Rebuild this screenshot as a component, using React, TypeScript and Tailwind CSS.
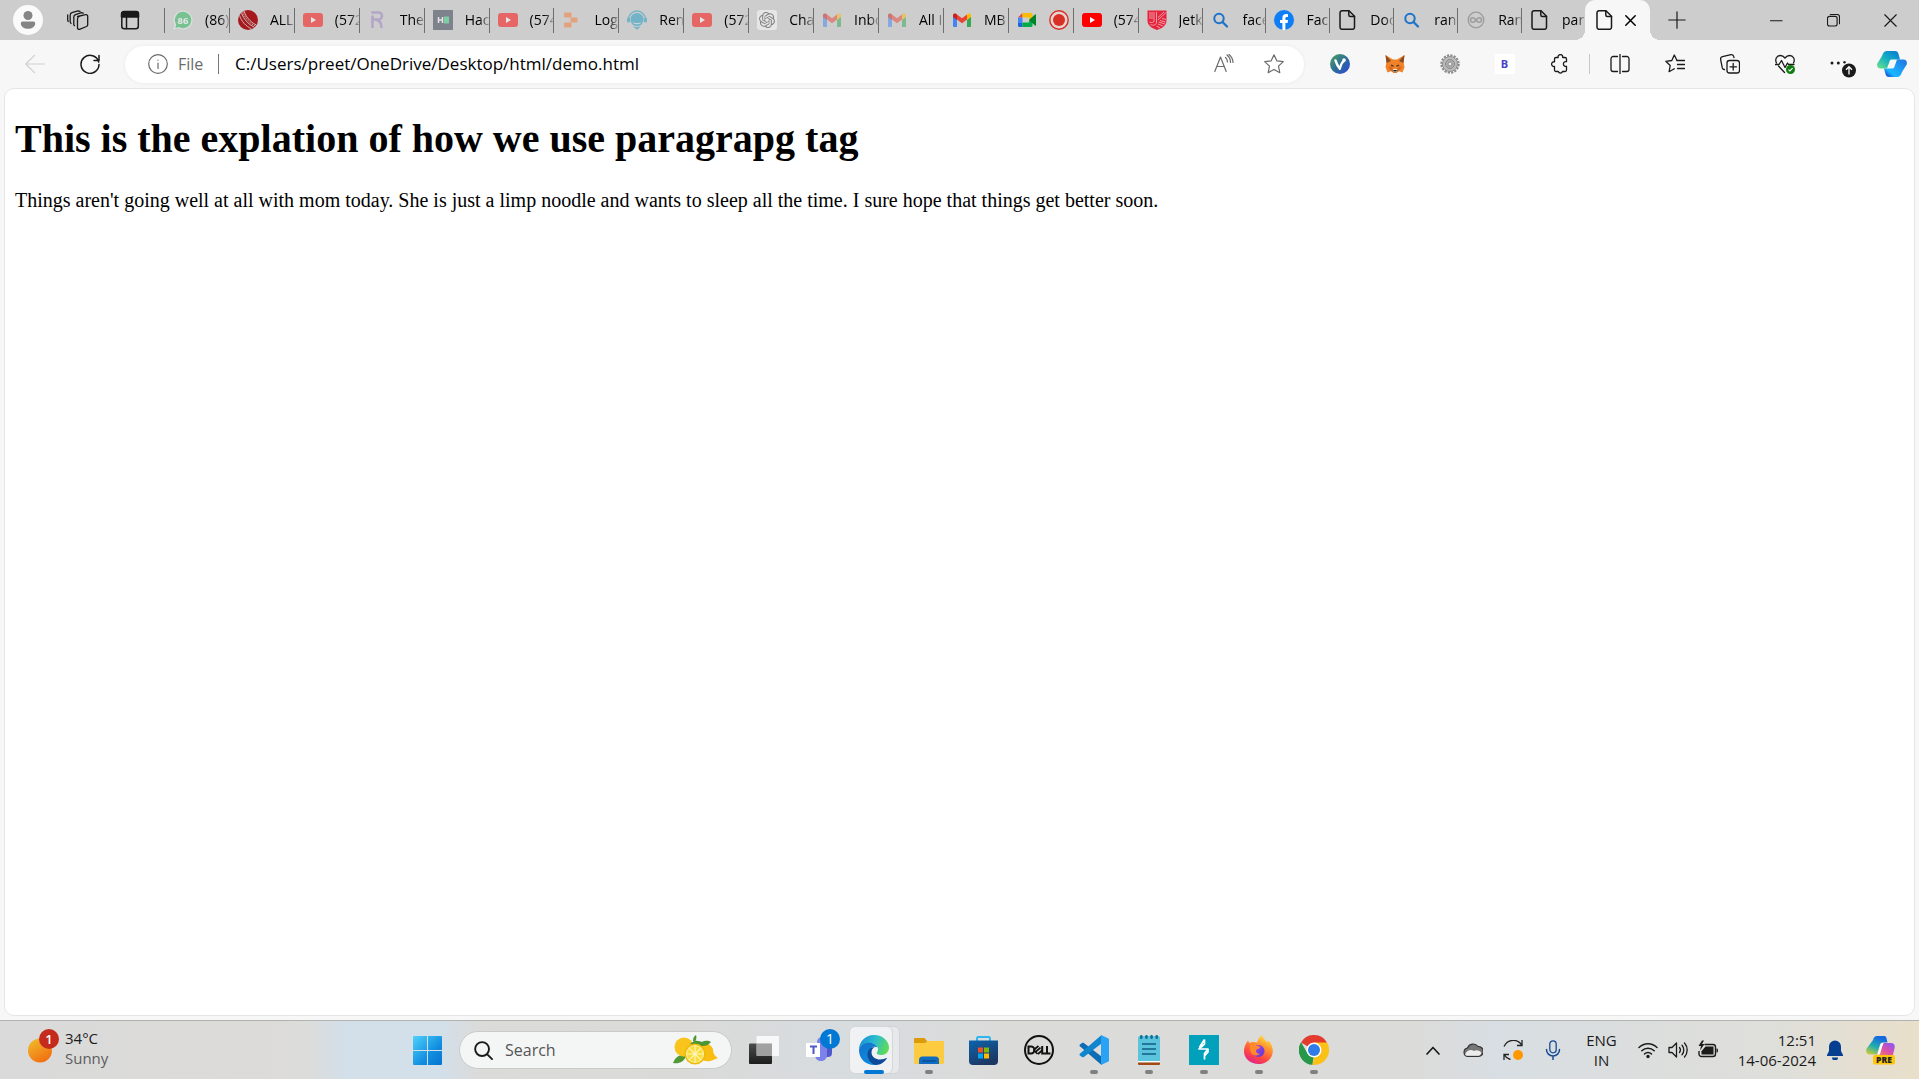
import React, { useState } from "react";
import type { ReactNode } from "react";
import { SiOpenai } from "react-icons/si";

type IconProps = { className?: string };

function Svg({ children, className = "size-5", box = "0 0 20 20" }: IconProps & { children: ReactNode; box?: string }) {
  return (
    <svg viewBox={box} className={`shrink-0 ${className}`} fill="none" aria-hidden="true">
      {children}
    </svg>
  );
}

function Line({ children, className, w = 1.2, box }: IconProps & { children: ReactNode; w?: number; box?: string }) {
  return (
    <Svg className={className} box={box}>
      <g stroke="currentColor" strokeWidth={w} strokeLinecap="round" strokeLinejoin="round">
        {children}
      </g>
    </Svg>
  );
}

/* ---------- favicons ---------- */

const YouTube = () => (
  <Svg>
    <rect y="3" width="20" height="14" rx="3" fill="#f00" />
    <path d="M8 7v6l5-3z" fill="#fff" />
  </Svg>
);

const WhatsApp = () => (
  <Svg>
    <path d="M10 .5a9.500 9.500 0 0 1 0 19 9.500 9.500 0 0 1-4.500-1.200L.4 19.600l1.300-5A9.500 9.500 0 0 1 10 .5z" fill="#e9f5ec" />
    <path d="M10 1.800a8.200 8.200 0 1 1-4.200 15.200l-3.500.9.900-3.400A8.200 8.200 0 0 1 10 1.800z" fill="#25b756" />
    <text x="10" y="13.500" textAnchor="middle" fontSize="9.500" fontWeight="700" fill="#fff" fontFamily="Open Sans, sans-serif">86</text>
  </Svg>
);

const CricketBall = () => (
  <Svg>
    <circle cx="10" cy="10" r="10" fill="#a5191d" />
    <g stroke="#cdbcbc" strokeWidth="1">
      <path d="M3.500 2.800c2 6 6.500 11.500 12.800 14.300" />
      <path d="M6 1c2 6 6 10.800 12 13.800" />
      <path d="M1.500 5.300c2 6 6 10.800 12 13.500" />
    </g>
    <path d="M4.800 2c2 6 6.400 11 12.500 14" stroke="#d9cccc" strokeWidth=".8" strokeDasharray="1.500 .7" />
  </Svg>
);

const LetterR = () => (
  <Svg>
    <g stroke="#9b80c4" strokeWidth="2.600">
      <path d="M4.500 18v-8.500h6a3.500 3.500 0 0 0 0-7H3.200" />
      <path d="M8.500 10c3 .5 5 3.500 5 8M4.500 5.500v4" />
    </g>
  </Svg>
);

const HackerEarth = () => (
  <Svg>
    <rect width="20" height="20" fill="#323b4b" />
    <path d="M5.500 7v6M9.500 7v6M5.500 10h4" stroke="#fff" strokeWidth="1.500" />
    <path d="M11 6.500h5v7h-5z" fill="#2fd07c" />
  </Svg>
);

const Blocks = () => (
  <Svg>
    <g fill="#f9782f">
      <rect x="2" y="2.500" width="7.500" height="5" rx="1" />
      <rect x="8.500" y="7.500" width="7" height="5" rx="1" />
      <rect x="2" y="12.500" width="7.500" height="5" rx="1" />
    </g>
  </Svg>
);

const Headset = () => (
  <Svg>
    <path d="M1.500 9.500a8.500 8.500 0 0 1 17 0" stroke="#1b9ac4" strokeWidth="1.300" />
    <rect x="0" y="7.500" width="3" height="5" rx="1.500" fill="#1b9ac4" />
    <rect x="17" y="7.500" width="3" height="5" rx="1.500" fill="#1b9ac4" />
    <circle cx="10" cy="9.500" r="6.600" fill="#1b9ac4" />
    <path d="M6 16.200c2.500 1 5.500 1 8 0l-4 3.500z" fill="#1b9ac4" />
    <path d="M5.500 12.500c2 2.200 7 2.200 9 0l-4.500.7z" fill="#d7ecf3" />
  </Svg>
);

const OpenAI = () => (
  <span className="flex size-5 items-center justify-center rounded-[3px] bg-white text-[#3c3c3c]">
    <SiOpenai size={16} />
  </span>
);

const Gmail = () => (
  <Svg>
    <path d="M1 5v11.200c0 .5.300.800.800.800H5V8.500z" fill="#4285f4" />
    <path d="M19 5v11.200c0 .5-.3.800-.8.800H15V8.500z" fill="#34a853" />
    <path d="M5 4.500v5l5 3.700 5-3.700v-5L10 8.200z" fill="#ea4335" />
    <path d="M1 5v2l4 3V4.500l-.9-.7C2.800 2.900 1 3.500 1 5z" fill="#c5221f" />
    <path d="M19 5v2l-4 3V4.500l.9-.7C17.200 2.900 19 3.500 19 5z" fill="#fbbc04" />
  </Svg>
);

const Meet = () => (
  <Svg>
    <path d="M1 7.500 5.500 3v4.500z" fill="#ea4335" />
    <path d="M5.500 3h8.700C15 3 15.500 3.500 15.500 4.200V8L12 10V7.500H5.500z" fill="#fbbc04" />
    <path d="M1 7.500h4.500v5.500H1z" fill="#4285f4" />
    <path d="M1 13h4.500v4H2.200C1.500 17 1 16.500 1 15.800z" fill="#1967d2" />
    <path d="M5.500 12.500H12V10l3.500 2.500v3.300c0 .7-.5 1.200-1.300 1.200H5.500z" fill="#00ac47" />
    <path d="m12 10 6-5.500c.4-.4 1-.1 1 .4v10.200c0 .5-.6.800-1 .4z" fill="#00832d" />
  </Svg>
);

const Recording = () => (
  <Svg>
    <circle cx="10" cy="10" r="9.200" stroke="#d93025" strokeWidth="1.400" fill="#e7d5d3" />
    <circle cx="10" cy="10" r="6" fill="#d93025" />
  </Svg>
);

const Shield = () => (
  <Svg>
    <path d="M.5.500h19v10c0 5-4.500 8-9.500 9.500C5 18.500.5 15.500.5 10.500z" fill="#e8223b" />
    <g stroke="#e7bcc1" strokeWidth=".8">
      <path d="M3 2v7M5 2v7M7 2v9c0 1.500-2.500 2-4.500 1M9.500 2v10c0 3-3 4-6 2.500M11 7.500l6-5.500M11 10l8-7.500M11.500 12l6.500 2M13 10.500l5.500 1.500M11 14l5 2M9.500 16l3.500 2M15 8.500l4 1" />
    </g>
  </Svg>
);

const BlueSearch = () => (
  <Svg>
    <circle cx="8" cy="8.500" r="4.700" stroke="#1b74c9" strokeWidth="2" />
    <path d="m11.500 12 4.500 4.500" stroke="#1b74c9" strokeWidth="2.300" strokeLinecap="round" />
  </Svg>
);

const Facebook = () => (
  <Svg>
    <circle cx="10" cy="10" r="10" fill="#0d7ef5" />
    <path d="M8.400 20v-7H6v-3h2.400V8c0-2.500 1.400-3.900 3.700-3.900.7 0 1.500.1 1.900.2v2.600h-1.200c-1.100 0-1.400.6-1.400 1.300V10h2.600l-.4 3h-2.200v7z" fill="#fff" />
  </Svg>
);

const FileIcon = () => (
  <Line w={1.500}>
    <path d="M4 .8h7L16.500 6.300v11a2 2 0 0 1-2 2H4a2 2 0 0 1-2-2V2.800a2 2 0 0 1 2-2z" />
    <path d="M10.800 1v4a1.500 1.500 0 0 0 1.500 1.500h4.200" />
  </Line>
);

const Infinity8 = () => (
  <Svg>
    <circle cx="10" cy="10" r="7.800" stroke="#9c9c9c" strokeWidth="1.300" />
    <path d="M10 10c-1-1.500-2-2.300-3.200-2.300a2.300 2.300 0 0 0 0 4.600C8 12.300 9 11.500 10 10s2-2.300 3.200-2.300a2.300 2.300 0 0 1 0 4.600C12 12.300 11 11.500 10 10z" stroke="#9c9c9c" strokeWidth="1.500" />
  </Svg>
);

/* ---------- toolbar icons ---------- */

const Fox = () => (
  <Svg>
    <path d="m.5 1 7.500 4.500h4L19.500 1l-1 7 1 5-2 5.500-4-1.500-2 1.700h-3L6.500 17l-4 1.500-2-5.500 1-5z" fill="#f0822a" />
    <path d="m.5 1 5.500 6-4.500 2zM19.500 1 14 7l4.500 2z" fill="#8a4b24" />
    <path d="m6 11 2.500 1-2-.2zM14 11l-2.500 1 2-.2z" stroke="#3a2a22" strokeWidth=".8" />
    <path d="m3 13 4-.5 1 4.500h4l1-4.500 4 .5-3 4-2.500 1.700h-3L6 17z" fill="#d96a1d" />
    <path d="m8 15.500.5-.5h3l.5.500V18H8z" fill="#f0e8df" />
    <path d="M8.300 16h3.400v1.500H8.300z" fill="#222" />
  </Svg>
);

const Vue = () => (
  <Svg>
    <defs>
      <linearGradient id="vg" x1="0" y1="0" x2="1" y2="1">
        <stop offset=".1" stopColor="#4a9a68" />
        <stop offset=".5" stopColor="#2c6d96" />
        <stop offset="1" stopColor="#2f45dd" />
      </linearGradient>
    </defs>
    <circle cx="10" cy="10" r="10" fill="url(#vg)" />
    <path d="M5.500 6.500c1 3 2.300 5.800 4.300 8.300 1-3 1.300-6.300 4.500-8.300" stroke="#fff" strokeWidth="2.400" strokeLinecap="round" strokeLinejoin="round" />
    <circle cx="14" cy="6" r="1.800" fill="#fff" />
  </Svg>
);

const Gear = () => (
  <Svg>
    <circle cx="10" cy="10" r="8.700" stroke="#8a8a8a" strokeWidth="2" strokeDasharray="2.200 1.220" />
    <circle cx="10" cy="10" r="7.500" fill="#bdbdbd" stroke="#8b8b8b" strokeWidth="1" />
    <circle cx="10" cy="10" r="4.500" fill="#b0b0b0" stroke="#7a7a7a" strokeWidth=".8" />
    <circle cx="10" cy="10" r="2" fill="#ececec" stroke="#777" strokeWidth=".8" />
  </Svg>
);

const BSquare = () => (
  <span className="flex size-5 items-center justify-center bg-white text-[11px] font-bold text-[#4440c4]">B</span>
);

const Puzzle = () => (
  <Line w={1.300}>
    <path d="M6 3.500h2.200a2.300 2.300 0 1 1 4.400 0H15a1.500 1.500 0 0 1 1.500 1.500v2.700a2.400 2.400 0 1 0 0 4.600V16a1.500 1.500 0 0 1-1.500 1.500h-2.500a2.200 2.200 0 0 1-4.200 0H6A1.500 1.500 0 0 1 4.500 16v-3.500a2.400 2.400 0 1 1 0-4.700V5A1.500 1.500 0 0 1 6 3.500z" />
  </Line>
);

const SplitScreen = () => (
  <Line w={1.300}>
    <path d="M10 .5v19M7.500 2.500H3.200A2.200 2.200 0 0 0 1 4.700v10.600a2.200 2.200 0 0 0 2.200 2.200h4.300M12.500 2.500h4.300A2.200 2.200 0 0 1 19 4.700v10.600a2.200 2.200 0 0 1-2.200 2.200h-4.300" />
  </Line>
);

const FavList = () => (
  <Line w={1.300}>
    <path d="M12 6.500 9.300 1 6.800 6.500.8 7.300l4.400 4.200-1.100 6.200 5.200-3" />
    <path d="M12 6.500h7.500M12.500 10.500h7M12.500 14.500h7" />
  </Line>
);

const Collections = () => (
  <Line w={1.300}>
    <rect x="7" y="6.500" width="12.500" height="12.500" rx="2.500" />
    <path d="M13.200 9.500v6.500M10 12.800h6.500M4.500 15.500l-1-.2a2 2 0 0 1-1.200-1.400L.6 5.500A2.500 2.500 0 0 1 2.500 2.700L11 .7a2.500 2.500 0 0 1 2.800 2l.2.800" />
  </Line>
);

const HeartPulse = () => (
  <Svg>
    <g stroke="#1a1a1a" strokeWidth="1.300" strokeLinejoin="round" strokeLinecap="round">
      <path d="M1.500 9C-.5 5 2 1.500 5.300 1.500c2 0 3.500 1 4.700 2.500 1.200-1.500 2.700-2.500 4.700-2.500C18 1.500 20.500 5 18.500 9M3.500 12l6 6.500" />
      <path d="M0 10.500h4l2.500-4 3.500 7 2.500-4.500 1 1.500H19" />
    </g>
    <circle cx="15.500" cy="15.500" r="4.500" fill="#107c10" />
    <path d="m13.500 15.600 1.400 1.400 2.700-2.800" stroke="#fff" strokeWidth="1.100" />
  </Svg>
);

const MoreUpdate = () => (
  <Svg className="h-7 w-8" box="-5 0 32 28">
    <g fill="#1a1a1a">
      <circle cx="3" cy="13" r="1.500" />
      <circle cx="9.300" cy="13" r="1.500" />
      <circle cx="15.500" cy="12.200" r="1.200" />
      <circle cx="20" cy="20.500" r="7" />
    </g>
    <path d="M20 24.500V17M17 19.700l3-3 3 3" stroke="#fff" strokeWidth="1.300" />
  </Svg>
);

const Copilot = () => (
  <Svg className="h-[26px] w-[30px]" box="0 0 30 26">
    <defs>
      <linearGradient id="ca" gradientUnits="userSpaceOnUse" x1="4" y1="18" x2="18" y2="0">
        <stop offset="0" stopColor="#62dc8e" />
        <stop offset=".5" stopColor="#14b0c4" />
        <stop offset="1" stopColor="#0b80d0" />
      </linearGradient>
      <linearGradient id="cb" gradientUnits="userSpaceOnUse" x1="26" y1="8" x2="10" y2="26">
        <stop offset="0" stopColor="#2078e0" />
        <stop offset=".5" stopColor="#1aa5fa" />
        <stop offset=".75" stopColor="#1ab8ff" />
        <stop offset="1" stopColor="#1447d0" />
      </linearGradient>
    </defs>
    <path d="M25 21c-1 3.500-2.500 5-5 5h-8c-2 0-3-1-3.500-3L7 17.500h8.500c1.200 0 1.700-.8 2-2L20 8.500h6.500c2.500 0 4 2 3.200 5z" fill="url(#cb)" />
    <path d="M5 5C6 1.500 7.500 0 10 0h8c2 0 3 1 3.500 3L23 8.500h-8.500c-1.200 0-1.700.8-2 2L10 17.500H3.500C1 17.500-.5 15.500.3 12.500z" fill="url(#ca)" />
  </Svg>
);

/* ---------- taskbar icons ---------- */

const Windows = () => (
  <Svg className="size-[29px]" box="0 0 29 29">
    <defs>
      <linearGradient id="wg" gradientUnits="userSpaceOnUse" x1="0" y1="0" x2="29" y2="29">
        <stop stopColor="#4fd2fb" />
        <stop offset=".6" stopColor="#128fe0" />
        <stop offset="1" stopColor="#0573cf" />
      </linearGradient>
    </defs>
    <path d="M0 1a1 1 0 0 1 1-1h13v14H0zM15 0h13a1 1 0 0 1 1 1v13H15zM0 15h14v14H1a1 1 0 0 1-1-1zM15 15h14v13a1 1 0 0 1-1 1H15z" fill="url(#wg)" />
  </Svg>
);

const Lemons = () => (
  <Svg className="h-[30px] w-[46px]" box="0 0 46 30">
    <path d="M20 6c0-3 1-5 3-6 1 3 0 5-1 7zM0 28c3-7 7-9 13-7-2 6-7 8-13 7z" fill="#4f9a34" />
    <circle cx="11" cy="12" r="9.500" fill="#f9c51d" />
    <path d="M28 8c6-1 10 2 12 6 0 4 1 6 5 9-3 1-4 2-8 3-6 1-11-2-12-8 0-5 0-8 3-10z" fill="#f7bd11" />
    <path d="M17 9c5-5 9-3 12-2 4-2 7-1 9 0-3 3-5 4-8 4-5 0-9 1-13-2z" fill="#4c9434" />
    <circle cx="22" cy="19" r="10.500" fill="#efb90c" />
    <circle cx="22" cy="19" r="9" fill="#fff3a8" />
    <circle cx="22" cy="19" r="8" fill="#f8dc3c" />
    <path d="M22 11v16M14 19h16M16.300 13.300l11.400 11.400M27.700 13.300 16.300 24.700" stroke="#fff6c0" strokeWidth="1.100" />
  </Svg>
);

const TaskView = () => (
  <Svg className="h-7 w-[30px]" box="0 0 30 28">
    <defs>
      <linearGradient id="tv" x1="0" y1="0" x2="0" y2="1">
        <stop stopColor="#4c4c4c" />
        <stop offset="1" stopColor="#1d1d1d" />
      </linearGradient>
    </defs>
    <rect y="7.500" width="23" height="20.500" rx="1" fill="url(#tv)" />
    <rect x="7.500" width="22.500" height="20" rx="1" fill="#fff" opacity=".8" />
    <path d="M7.500 7.500H23V20H8.500a1 1 0 0 1-1-1z" fill="#8f8f8f" opacity=".75" />
  </Svg>
);

const Teams = () => (
  <Svg className="size-[42px]" box="-8 0 42 42">
    <circle cx="16" cy="13" r="5" fill="#7b83eb" />
    <path d="M17 14h9v10c0 3-2 4-4 4h-5z" fill="#5059c9" />
    <path d="M9 15h12v11c0 4-3 6-6 6s-6-2-6-6z" fill="#7b83eb" />
    <rect y="14" width="14" height="14" fill="#fff" />
    <path d="M4 17.500h7M7.500 17.500V25" stroke="#5059c9" strokeWidth="2" />
    <circle cx="24" cy="10" r="10" fill="#0078d4" />
    <text x="24" y="15" textAnchor="middle" fontSize="14" fill="#fff" fontFamily="Open Sans, sans-serif">1</text>
  </Svg>
);

const Edge = () => (
  <Svg className="size-[30px]" box="0 0 30 30">
    <defs>
      <linearGradient id="eg" x1="0" y1=".3" x2="1" y2=".6">
        <stop stopColor="#1a8edb" />
        <stop offset=".5" stopColor="#2bbfcb" />
        <stop offset="1" stopColor="#62dc50" />
      </linearGradient>
      <linearGradient id="eb" x1="0" y1="0" x2=".6" y2="1">
        <stop stopColor="#1273c9" />
        <stop offset="1" stopColor="#0f8be0" />
      </linearGradient>
    </defs>
    <path d="M0 15C0 7 6 0 15 0s15 6.500 15 12.500c0 5-4 7.500-7.500 7.500-3 0-4.800-1-4.800-2 0-.8 1.300-1.200 1.300-4 0-3-3.500-6-8.500-6C5 8 1 11 0 15z" fill="url(#eg)" />
    <path d="M0 15c1-4.500 5-7.200 10-7.200 4 0 7.500 1.700 8.500 4.700-4-2-8 1-8 6 0 5.500 4 10 8.500 11-1.200.4-2.500.5-4 .5C6.500 30 0 23.500 0 15z" fill="url(#eb)" />
    <path d="M16 12c-2.500 1-3.500 3-3.500 5.500 0 4.500 4.500 7 8.500 7 3 0 5-.8 6.300-1.500.5-.2.800.2.500.6C25 27.500 21.500 30 17 30 12 29 8.500 24.500 8.500 19.500c0-4 2.500-7.300 7.500-7.500z" fill="#0d4a98" />
  </Svg>
);

const Explorer = () => (
  <Svg className="h-[27px] w-[30px]" box="0 0 30 27">
    <path d="M0 2a1 1 0 0 1 1-1h9.500L13 4h16a1 1 0 0 1 1 1v5H0z" fill="#dc9b0b" />
    <path d="M0 6h11l2.500-2H29a1 1 0 0 1 1 1v21a1 1 0 0 1-1 1H1a1 1 0 0 1-1-1z" fill="#fdcb3f" />
    <path d="M5 27v-4a3.500 3.500 0 0 1 3.500-3.500h13A3.500 3.500 0 0 1 25 23v4z" fill="#0f6cc0" />
    <path d="M8.500 24h13" stroke="#0b4a8c" strokeWidth="1.300" />
  </Svg>
);

const Store = () => (
  <Svg className="h-[30px] w-[29px]" box="0 0 29 30">
    <defs>
      <linearGradient id="st" x1="0" y1="0" x2=".5" y2="1">
        <stop stopColor="#0b64ae" />
        <stop offset="1" stopColor="#1d3763" />
      </linearGradient>
    </defs>
    <path d="M8 7V3.500A1.500 1.500 0 0 1 9.500 2h10A1.500 1.500 0 0 1 21 3.500V7" stroke="#2fb5f2" strokeWidth="2" />
    <path d="M0 5.500h29V26a4 4 0 0 1-4 4H4a4 4 0 0 1-4-4z" fill="url(#st)" />
    <path d="M9 12.500h5v5H9z" fill="#f25022" />
    <path d="M15 12.500h5v5h-5z" fill="#7fba00" />
    <path d="M9 18.500h5v5H9z" fill="#00a4ef" />
    <path d="M15 18.500h5v5h-5z" fill="#ffb900" />
  </Svg>
);

const Dell = () => (
  <Svg className="size-[30px]" box="0 0 30 30">
    <circle cx="15" cy="15" r="14" stroke="#111" strokeWidth="2" />
    <g stroke="#111" strokeWidth="2">
      <path d="M4.500 11.500H7a3.500 3.500 0 0 1 0 7H4.500z" />
      <path d="m9.500 15 5-4M9.500 15l4 4M12 16.500l4.500-3.800M14 19l4.500-4" strokeWidth="1.700" />
      <path d="M18.200 11v7.500H22M23 11v7.500h3.500" />
    </g>
  </Svg>
);

const VSCode = () => (
  <Svg className="size-[30px]" box="0 0 30 30">
    <path d="M1 9.500 3 8c.6-.4 1.300-.4 1.800 0L22.500 21.500V30L.9 11.300c-.6-.5-.5-1.300.1-1.800z" fill="#0d6cb4" />
    <path d="M1 20.500 3 22c.6.400 1.300.4 1.800 0L22.500 8.500V0L.9 18.700c-.6.500-.5 1.300.1 1.800z" fill="#0f84cf" />
    <path d="m22 0 7 3.200c.6.300 1 .8 1 1.500v20.600c0 .7-.4 1.200-1 1.500L22 30z" fill="#2aa3f4" />
  </Svg>
);

const Notepad = () => (
  <Svg className="h-[30px] w-[22px]" box="0 0 22 30">
    <path d="M0 3a2 2 0 0 1 2-2h18a2 2 0 0 1 2 2v24H0z" fill="#5cc3dc" />
    <path d="M0 26h22v1.500H0z" fill="#fff" />
    <path d="M0 27.500h22V29a1 1 0 0 1-1 1H1a1 1 0 0 1-1-1z" fill="#a34a14" />
    <path d="M4 9h14M4 14h14M4 19h14" stroke="#0f5c85" strokeWidth="1.600" />
    <g fill="#0f6f95">
      <rect x="2" width="2.500" height="4" rx="1.200" />
      <rect x="7.200" width="2.500" height="4" rx="1.200" />
      <rect x="12.300" width="2.500" height="4" rx="1.200" />
      <rect x="17.500" width="2.500" height="4" rx="1.200" />
    </g>
  </Svg>
);

const Burp = () => (
  <Svg className="size-[30px]" box="0 0 30 30">
    <rect width="30" height="30" fill="#02a1bb" />
    <path d="M15.500 4.500V9L10 14h9l-3.500 4.500v6M15.500 4.500 11 11.500l-.5 2.500H19v3l-3.500 4" stroke="#fff" strokeWidth="1.700" strokeLinejoin="round" />
  </Svg>
);

const Firefox = () => (
  <Svg className="h-[30px] w-[29px]" box="0 0 29 30">
    <defs>
      <linearGradient id="ff" x1=".8" y1="0" x2=".3" y2="1">
        <stop stopColor="#ffe847" />
        <stop offset=".35" stopColor="#ff9a2e" />
        <stop offset=".7" stopColor="#ff4a3f" />
        <stop offset="1" stopColor="#e0208a" />
      </linearGradient>
      <linearGradient id="fp" x1="0" y1="0" x2="1" y2="1">
        <stop stopColor="#b044f5" />
        <stop offset="1" stopColor="#5b3ac9" />
      </linearGradient>
    </defs>
    <path d="M4 5.500c.5 1 .8 1.800 1.500 2.500C8 6.500 11 7 13 7.500 14 5 15 2 18 0c1 3.500 3 5 5 7l2-1c3 4 4 8 3.800 10.500C28.500 24 22 29 14.500 29S0 24 0 16.500C0 13 1 9 4 5.500z" fill="url(#ff)" />
    <circle cx="14.500" cy="16" r="6" fill="url(#fp)" />
    <path d="M6 9c3-.5 5 0 6.500 2 2 0 3.500.3 3.500 1.500 0 1.500-4 1-4 3.500 0 2 2 3 4 3-4 3-10 1-10-5z" fill="#ff8a2b" />
  </Svg>
);

const Chrome = () => (
  <Svg className="size-[30px]" box="0 0 30 30">
    <path d="M15 15 2 7.500A15 15 0 0 1 28 7.500z" fill="#e33b2e" />
    <path d="M15 15h-.1L15 30A15 15 0 0 0 28 7.500H15z" fill="#fbc116" />
    <path d="M15 15v.1L13.500 30A15 15 0 0 1 2 7.500L8.500 18.700z" fill="#279847" />
    <path d="m21.500 18.700-6.500 11.300h-1.500l1.500-8z" fill="#fbc116" />
    <path d="M8.500 18.700A7.500 7.500 0 0 0 15 22.500L11 29.500A15 15 0 0 1 2 7.500z" fill="#279847" />
    <circle cx="15" cy="15" r="7.500" fill="#fff" />
    <circle cx="15" cy="15" r="6" fill="#2f7bea" />
  </Svg>
);

const WeatherSun = () => (
  <Svg className="h-[34px] w-[31px]" box="0 0 31 34">
    <defs>
      <linearGradient id="sn" x1=".2" y1="0" x2=".8" y2="1">
        <stop stopColor="#f1b92b" />
        <stop offset="1" stopColor="#f2690f" />
      </linearGradient>
    </defs>
    <circle cx="12" cy="21.500" r="12" fill="url(#sn)" />
    <circle cx="21" cy="10" r="10" fill="#c42b1c" />
    <text x="21" y="15" textAnchor="middle" fontSize="13" fontWeight="600" fill="#fff" fontFamily="Open Sans, sans-serif">1</text>
  </Svg>
);

const Cloud = () => (
  <Svg>
    <path d="M5 16.500a4.300 4.300 0 0 1-.5-8.500A6 6 0 0 1 15 6.500a5 5 0 0 1 .5 10z" fill="#777" stroke="#333" strokeWidth="1.200" />
    <path d="M2 14.500C4 10 8 9 11 11c2-1.500 5-1 7.300 1.500-.3 2-1.500 3.300-3.300 3.300H5c-1.500 0-2.500-.5-3-1.300z" fill="#ececec" />
  </Svg>
);

const Sync = () => (
  <Svg>
    <g stroke="#222" strokeWidth="1.300">
      <path d="M1 6.500C5-1.500 15-1.500 19 5.500M19 0v5.500h-5M1 20v-5.500h5M1.500 15c1 2 3.500 4 6 4.500" />
    </g>
    <circle cx="15" cy="15" r="5" fill="#ff9800" />
  </Svg>
);

const Mic = () => (
  <Svg>
    <rect x="6.800" y=".8" width="6.400" height="12" rx="3.200" stroke="#174a94" strokeWidth="1.300" />
    <path d="M3.500 9.500a6.500 6.500 0 0 0 13 0M10 16v3.500" stroke="#174a94" strokeWidth="1.500" strokeLinecap="round" />
  </Svg>
);

const Wifi = () => (
  <Line w={1.500}>
    <path d="M1 7.500c5-5 13-5 18 0M3.800 10.800c3.500-3.500 8.900-3.500 12.400 0M6.500 14c2-2 5-2 7 0" />
    <circle cx="10" cy="16.500" r="1" fill="currentColor" />
  </Line>
);

const Volume = () => (
  <Line w={1.300}>
    <path d="M1 7.500h3L8.500 3v14L4 12.500H1zM11.500 7.500a4 4 0 0 1 0 5M14 5.300a7 7 0 0 1 0 9.400M16.500 3a10.500 10.500 0 0 1 0 14" />
  </Line>
);

const Battery = () => (
  <Svg>
    <path d="M6.500 4.500H15A2.500 2.500 0 0 1 17.500 7v7a2.500 2.500 0 0 1-2.500 2.500H3.500A2.500 2.500 0 0 1 1 14v-3" stroke="#1b1b1b" strokeWidth="1.400" />
    <path d="M7.500 6.500h8v8h-12v-3.300z" fill="#1b1b1b" />
    <path d="M18.500 8.500c1 0 1.500.5 1.500 2s-.5 2-1.500 2z" fill="#1b1b1b" />
    <path d="M4 .5.500 6H3l-1 4.500L6.500 4H4l2-3.500z" fill="#1b1b1b" />
  </Svg>
);

const Bell = () => (
  <Svg className="h-5 w-4" box="0 0 16 20">
    <path d="M8 .5A6 6 0 0 1 14 6.500V11l2 4v1H0v-1l2-4V6.500A6 6 0 0 1 8 .5z" fill="#063f90" />
    <path d="M5 17.500h6a3 3 0 0 1-6 0z" fill="#063f90" />
  </Svg>
);

const CopilotPre = () => (
  <Svg className="size-[29px]" box="0 0 29 29">
    <defs>
      <linearGradient id="pa" x1=".5" y1="0" x2="0" y2="1">
        <stop stopColor="#1568e0" />
        <stop offset=".5" stopColor="#20aeb0" />
        <stop offset="1" stopColor="#e9cf22" />
      </linearGradient>
      <linearGradient id="pb" x1=".8" y1="0" x2="0" y2="1">
        <stop stopColor="#9553f0" />
        <stop offset=".5" stopColor="#e054a0" />
        <stop offset="1" stopColor="#ff9550" />
      </linearGradient>
    </defs>
    <path d="M7 4c.6-2.500 2-4 4-4h7c2.500 0 2.500 2 3.500 6.500H17c-2 0-2.600 1-3.300 3L11 18.500H4C1 18.500-.5 16.500.3 13z" fill="url(#pa)" />
    <path d="M17.500 7H25c3 0 4.300 2 3.500 5.500l-2 8.500H10l2.500-2.500c.8-1 1.500-3 2-5z" fill="url(#pb)" />
    <path d="M17.500 7h-1.300c-1.200.6-1.800 2-2.300 4l-2.300 7.500h2.200c1.300-3 2-8 3.700-11.500z" fill="#fff" />
    <rect x="7" y="19" width="22" height="9.500" rx="2" fill="#ffc60b" />
    <text x="18" y="26.500" textAnchor="middle" fontSize="8.500" fontWeight="800" fill="#222" fontFamily="Open Sans, sans-serif">PRE</text>
  </Svg>
);

/* ---------- data ---------- */

type Tab = { title: string; icon: () => ReactNode; asleep?: boolean; compact?: boolean };

const tabs: Tab[] = [
  { title: "(86)", icon: WhatsApp, asleep: true },
  { title: "ALL", icon: CricketBall },
  { title: "(572", icon: YouTube, asleep: true },
  { title: "The", icon: LetterR, asleep: true },
  { title: "Hac", icon: HackerEarth, asleep: true },
  { title: "(574", icon: YouTube, asleep: true },
  { title: "Log", icon: Blocks, asleep: true },
  { title: "Ren", icon: Headset, asleep: true },
  { title: "(572", icon: YouTube, asleep: true },
  { title: "Cha", icon: OpenAI, asleep: true },
  { title: "Inbo", icon: Gmail, asleep: true },
  { title: "All I", icon: Gmail, asleep: true },
  { title: "MB", icon: Gmail },
  { title: "", icon: Meet },
  { title: "(574", icon: YouTube },
  { title: "Jetk", icon: Shield, compact: true },
  { title: "face", icon: BlueSearch, compact: true },
  { title: "Fac", icon: Facebook, compact: true },
  { title: "Doc", icon: FileIcon, compact: true },
  { title: "ran", icon: BlueSearch, compact: true },
  { title: "Ran", icon: Infinity8, compact: true },
  { title: "par", icon: FileIcon, compact: true },
];

const extensions = [
  { label: "Vidyard", icon: Vue },
  { label: "MetaMask", icon: Fox },
  { label: "Settings extension", icon: Gear },
  { label: "B extension", icon: BSquare },
  { label: "Extensions", icon: Puzzle },
];

const tools = [
  { label: "Split screen", icon: SplitScreen },
  { label: "Favorites", icon: FavList },
  { label: "Collections", icon: Collections },
  { label: "Browser essentials", icon: HeartPulse },
  { label: "Settings and more", icon: MoreUpdate },
];

const apps = [
  { label: "Task view", icon: TaskView },
  { label: "Teams", icon: Teams },
  { label: "Edge", icon: Edge, active: true },
  { label: "File Explorer", icon: Explorer, running: true },
  { label: "Microsoft Store", icon: Store },
  { label: "Dell", icon: Dell },
  { label: "Visual Studio Code", icon: VSCode, running: true },
  { label: "Notepad", icon: Notepad, running: true },
  { label: "Burp Suite", icon: Burp, running: true },
  { label: "Firefox", icon: Firefox, running: true },
  { label: "Chrome", icon: Chrome, running: true },
];

/* ---------- sections ---------- */

function TabStrip() {
  return (
    <header className="flex h-10 shrink-0 bg-[#cdcdcd] text-[#1a1a1a]">
      <div className="flex w-[164px] shrink-0 items-center pl-[13px]">
        <button aria-label="Profile">
          <Svg className="size-[30px]" box="0 0 30 30">
            <circle cx="15" cy="15" r="15" fill="#fafafa" />
            <circle cx="15" cy="10.500" r="4.500" fill="#858585" />
            <path d="M9.500 16.500h11a1.700 1.700 0 0 1 1.700 1.700c0 3.500-3.200 5.500-7.200 5.500s-7.200-2-7.200-5.500a1.700 1.700 0 0 1 1.700-1.700z" fill="#858585" />
          </Svg>
        </button>
        <button aria-label="Workspaces" className="ml-6">
          <Line className="size-[22px]" box="0 0 22 22" w={1.300}>
            <path d="M10.500 7.500 18.500 5.700a1.700 1.700 0 0 1 2.200 1.700v8.300a2 2 0 0 1-1.200 1.800l-7 2.800a1.500 1.500 0 0 1-2-1.300V10a2.500 2.500 0 0 1 1.800-2.500z" />
            <path d="M7.500 16.500 6.800 16V8a2.500 2.500 0 0 1 1.700-2.300l6-2 1.700.5M4 14.500 3.200 13V6a2.500 2.500 0 0 1 1.700-2.300L11 1.800l2 .5M1.200 12.500.7 11V6" />
          </Line>
        </button>
        <button aria-label="Tab actions" className="ml-[30px]">
          <Line className="size-[22px]" box="0 0 22 22" w={1.500}>
            <rect x="2.800" y="2.800" width="16.500" height="17" rx="2.500" />
            <path d="M7.500 7v12.500" />
            <path d="M2.500 8V5a2.500 2.500 0 0 1 2.500-2.500h12A2.500 2.500 0 0 1 19.500 5v3z" fill="currentColor" />
          </Line>
        </button>
      </div>
      <div role="tablist" className="flex min-w-0 flex-1">
        {tabs.map(({ title, icon: Icon, asleep, compact }, i) => (
          <button
            key={i}
            role="tab"
            aria-selected={false}
            aria-label={title || "Meet"}
            className={`flex min-w-0 basis-0 items-center overflow-hidden ${compact ? "grow-[64]" : "grow-[65]"}`}
          >
            <span className="h-[25px] w-px shrink-0 bg-[#6e6e6e]" />
            <span className={asleep ? "ml-2 opacity-50" : "ml-2"}>
              <Icon />
            </span>
            {title ? (
              <span className="ml-3 flex-1 overflow-hidden text-left text-sm leading-5 whitespace-nowrap text-black [mask-image:linear-gradient(to_right,black_60%,transparent_110%)]">
                {title}
              </span>
            ) : (
              <span className="ml-3">
                <Recording />
              </span>
            )}
          </button>
        ))}
        <div role="tab" aria-selected="true" className="relative flex w-[65px] shrink-0 items-center rounded-t-[10px] bg-[#f7f7f7] pl-2.5">
          <span className="absolute bottom-0 -left-[10px] size-[10px] bg-[radial-gradient(circle_at_0_0,#cdcdcd_10px,#f7f7f7_10px)]" />
          <span className="absolute -right-[10px] bottom-0 size-[10px] bg-[radial-gradient(circle_at_100%_0,#cdcdcd_10px,#f7f7f7_10px)]" />
          <FileIcon />
          <button aria-label="Close tab" className="ml-2.5 text-black">
            <Line className="size-[11px]" box="0 0 11 11" w={1.500}>
              <path d="m.8.800 9.400 9.400M10.200.800.8 10.200" />
            </Line>
          </button>
        </div>
      </div>
      <div className="flex shrink-0">
        <button aria-label="New tab" className="mr-11 flex w-[54px] items-center justify-center">
          <Line className="size-[18px]" box="0 0 18 18">
            <path d="M9 .8v16.400M.8 9h16.400" />
          </Line>
        </button>
        {[
          { label: "Minimize", d: "M.5 7h12" },
          { label: "Restore", d: "M2.500 2.500h6a2 2 0 0 1 2 2v6a2 2 0 0 1-2 2h-6a2 2 0 0 1-2-2v-6a2 2 0 0 1 2-2zM3.500 .5h7a2.500 2.500 0 0 1 2.500 2.500v7" },
          { label: "Close", d: "m.8.800 11.900 11.900M12.700.800.8 12.700" },
        ].map(({ label, d }) => (
          <button key={label} aria-label={label} className="flex w-[57px] items-center justify-center">
            <Line className="size-[13px]" box="0 0 13.500 13.500">
              <path d={d} />
            </Line>
          </button>
        ))}
      </div>
    </header>
  );
}

function Toolbar() {
  const [url, setUrl] = useState("C:/Users/preet/OneDrive/Desktop/html/demo.html");
  return (
    <nav className="flex h-12 shrink-0 items-center bg-[#f7f7f7] text-[#1a1a1a]">
      <div className="flex w-[125px] shrink-0 items-center gap-[35px] pl-[25px]">
        <button aria-label="Back" className="text-[#cfcfcf]">
          <Line>
            <path d="M19.500 10H.8M9.500 1.300.8 10l8.700 8.700" />
          </Line>
        </button>
        <button aria-label="Refresh">
          <Line w={1.500}>
            <path d="M18.700 8A9 9 0 1 0 19 10.500M19 1.500V6.500h-5" />
          </Line>
        </button>
      </div>
      <div className="flex h-[37px] min-w-0 flex-1 items-center rounded-full bg-white pr-5 pl-[23px] text-[17px] shadow-[0_0_4px_rgba(0,0,0,0.06)]">
        <div className="flex w-[87px] shrink-0 items-center">
          <label htmlFor="address" className="flex items-center gap-[10px] text-base text-[#6b6b6b]">
            <Line>
              <circle cx="10" cy="10" r="9.300" />
              <path d="M10 9v5.500M10 6v.2" />
            </Line>
            File
          </label>
          <span className="mr-4 ml-auto h-5 w-px bg-[#777]" />
        </div>
        <input
          id="address"
          value={url}
          onChange={(e) => setUrl(e.target.value)}
          className="min-w-0 flex-1 bg-transparent text-black outline-none"
        />
        <div className="flex items-center gap-[30px] text-[#6b6b6b]">
          <button aria-label="Read aloud">
            <Line>
              <path d="M.8 17.500 6.500 3l5.700 14.500M2.800 12.500h7.500M11.500 3.500a6 6 0 0 1 2 4.500M13 1a9.500 9.500 0 0 1 3.500 7.500M15 .5a11 11 0 0 1 4 8" />
            </Line>
          </button>
          <button aria-label="Add to favorites">
            <Line>
              <path d="m10 .8 2.800 6 6.500.8-4.800 4.500 1.300 6.600-5.800-3.300-5.800 3.300 1.300-6.600L.7 7.600l6.500-.8z" />
            </Line>
          </button>
        </div>
      </div>
      <div className="flex shrink-0 items-center pl-2">
        {extensions.map(({ label, icon: Icon }) => (
          <button key={label} aria-label={label} className="flex w-[55px] justify-center">
            <Icon />
          </button>
        ))}
        <span className="mx-[2px] h-5 w-px bg-[#c8c8c8]" />
        {tools.map(({ label, icon: Icon }) => (
          <button key={label} aria-label={label} className="flex w-[55px] justify-center">
            <Icon />
          </button>
        ))}
        <button aria-label="Copilot" className="mr-3 ml-2.5 flex">
          <Copilot />
        </button>
      </div>
    </nav>
  );
}

function Taskbar() {
  return (
    <footer className="flex h-[59px] shrink-0 items-stretch border-t border-[#b0b3b0] bg-[linear-gradient(90deg,#dadada_0%,#dcdbd9_14%,#dcdcda_16%,#d3dfe9_18%,#d3dfe9_23%,#dbdbd9_25%,#dadad9_36%,#d7dcdf_44%,#dbdbda_52%,#dbdbda_74%,#d8dee3_78%,#dcdedd_86%,#dfdfda_93%,#e9dfca_100%)] text-[15px] text-[#1b1b1b]">
      <div className="flex w-[400px] shrink-0 items-center pl-7">
        <button className="flex items-center gap-1.5 pb-1 text-left leading-5">
          <span className="pb-1">
            <WeatherSun />
          </span>
          <span>
            <span className="block">34°C</span>
            <span className="block text-[#5c5c5c]">Sunny</span>
          </span>
        </button>
      </div>
      <div className="flex items-center">
        <button aria-label="Start" className="flex w-[55px] justify-center">
          <Windows />
        </button>
        <label className="mr-1 ml-1 flex h-[38px] w-[273px] items-center rounded-full border border-[#c9cbcb] bg-[#f4f5f5] pr-3 pl-3.5">
          <Line className="size-[19px]" w={2}>
            <circle cx="8.500" cy="8.500" r="7.300" />
            <path d="m14 14 5 5" />
          </Line>
          <input aria-label="Search" placeholder="Search" className="ml-3 min-w-0 flex-1 bg-transparent text-base outline-none placeholder:text-[#555]" />
          <Lemons />
        </label>
        {apps.map(({ label, icon: Icon, active, running }) => (
          <button key={label} aria-label={label} className="relative flex h-full w-[55px] items-center justify-center">
            {active && (
              <>
                <span className="absolute top-[5px] left-2 h-12 w-[46px] rounded-md border border-[#d2d4d5] bg-[#e6e8e9]" />
                <span className="absolute top-[5px] left-[3px] h-12 w-11 rounded-md border border-[#d4d6d7] bg-[#eff1f2]" />
              </>
            )}
            <span className="relative">
              <Icon />
            </span>
            {active && <span className="absolute bottom-[5px] h-1 w-5 rounded-full bg-[#0078d4]" />}
            {running && <span className="absolute bottom-[5px] h-1 w-2 rounded-full bg-[#808080]" />}
          </button>
        ))}
      </div>
      <div className="ml-auto flex items-center">
        <button aria-label="Show hidden icons">
          <Line className="mr-[23px] h-[9px] w-[14px]" box="0 0 14 9" w={1.700}>
            <path d="m1 8 6-6.500L13 8" />
          </Line>
        </button>
        <div className="flex items-center gap-5">
          <Cloud />
          <Sync />
          <Mic />
        </div>
        <button className="ml-[23px] text-center leading-5">
          ENG
          <br />
          IN
        </button>
        <button aria-label="Network, volume and battery" className="ml-[21px] flex gap-2.5">
          <Wifi />
          <Volume />
          <Battery />
        </button>
        <button className="ml-5 text-right leading-5">
          12:51
          <br />
          14-06-2024
        </button>
        <button aria-label="Notifications" className="ml-[11px]">
          <Bell />
        </button>
        <button aria-label="Copilot preview" className="mr-6 ml-[23px]">
          <CopilotPre />
        </button>
      </div>
    </footer>
  );
}

export default function App() {
  return (
    <div className="flex h-screen flex-col overflow-hidden bg-[#f7f7f7] font-['Open_Sans','Noto_Sans',sans-serif]">
      <TabStrip />
      <Toolbar />
      <main className="mx-1 mb-1 min-h-0 flex-1 overflow-auto rounded-[10px] border border-[#e6e6e6] bg-white px-2.5 font-['Liberation_Serif',serif] text-black">
        <h1 className="mt-[27px] text-[40px] leading-[46px] font-bold">This is the explation of how we use paragrapg tag</h1>
        <p className="mt-[26px] text-xl leading-6">
          Things aren't going well at all with mom today. She is just a limp noodle and wants to sleep all the time. I sure hope that things get better soon.
        </p>
      </main>
      <Taskbar />
    </div>
  );
}
